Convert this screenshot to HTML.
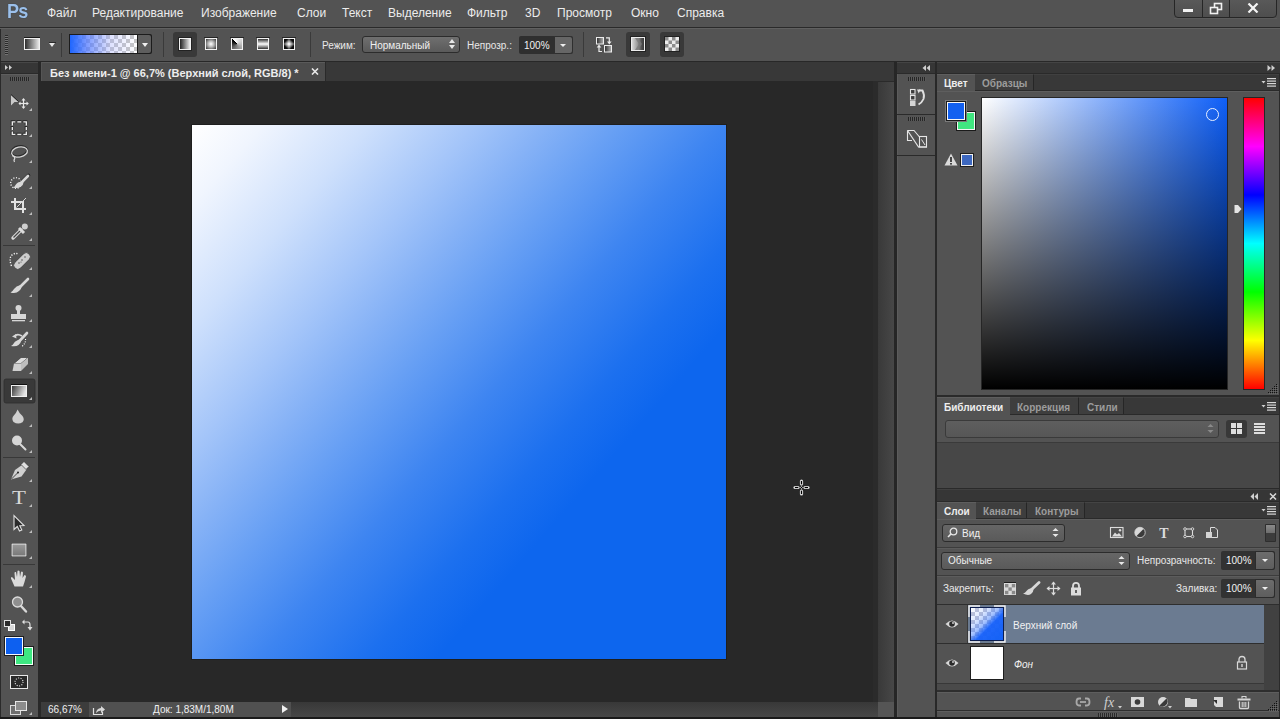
<!DOCTYPE html>
<html><head><meta charset="utf-8">
<style>
*{margin:0;padding:0;box-sizing:border-box}
html,body{width:1280px;height:719px;overflow:hidden;background:#535353;font-family:"Liberation Sans",sans-serif;color:#e6e6e6}
.a{position:absolute}
.t{position:absolute;white-space:nowrap;line-height:1}
.menu{font-size:12px;color:#ececec;top:7px}
</style></head><body>
<!-- MENU BAR -->
<div class="a" style="left:0;top:0;width:1280px;height:27px;background:#535353"></div>
<div class="t" style="left:7px;top:0px;font-size:21px;font-weight:bold;color:#9cc0ea;letter-spacing:-1px;transform:scaleX(0.86);transform-origin:0 0;text-shadow:0 0 1px #1c2a3c">Ps</div>
<div class="t menu" style="left:47px">Файл</div>
<div class="t menu" style="left:92px">Редактирование</div>
<div class="t menu" style="left:201px">Изображение</div>
<div class="t menu" style="left:297px">Слои</div>
<div class="t menu" style="left:342px">Текст</div>
<div class="t menu" style="left:388px">Выделение</div>
<div class="t menu" style="left:467px">Фильтр</div>
<div class="t menu" style="left:525px">3D</div>
<div class="t menu" style="left:557px">Просмотр</div>
<div class="t menu" style="left:631px">Окно</div>
<div class="t menu" style="left:677px">Справка</div>

<!-- window controls -->
<div class="a" style="left:1174px;top:-3px;width:103px;height:21px;background:linear-gradient(180deg,#5a5a5a,#4e4e4e);border:1px solid #262626;border-radius:0 0 4px 4px"></div>
<div class="a" style="left:1202px;top:0;width:1px;height:17px;background:#262626"></div>
<div class="a" style="left:1229px;top:0;width:1px;height:17px;background:#262626"></div>
<div class="a" style="left:1174px;top:18px;width:103px;height:1px;background:#606060;opacity:.6"></div>
<div class="a" style="left:1183px;top:9px;width:10px;height:3px;background:#f2f2f2"></div>
<svg class="a" style="left:1209px;top:2px" width="15" height="13" viewBox="0 0 15 13"><rect x="5.5" y="1.5" width="7" height="6" fill="none" stroke="#f2f2f2" stroke-width="1.6"/><rect x="1.5" y="5.5" width="7" height="6" fill="#525252" stroke="#f2f2f2" stroke-width="1.6"/></svg>
<svg class="a" style="left:1247px;top:3px" width="12" height="10" viewBox="0 0 12 10"><path d="M1.5,0.5 L10.5,9.5 M10.5,0.5 L1.5,9.5" stroke="#f4f4f4" stroke-width="2.2"/></svg>
<div class="a" style="left:0;top:27px;width:1280px;height:1px;background:#2a2a2a"></div>
<div class="a" style="left:0;top:28px;width:1280px;height:1px;background:#606060"></div>

<!-- OPTIONS BAR -->
<div class="a" style="left:5px;top:35px;width:3px;height:20px;background:repeating-linear-gradient(180deg,#2a2a2a 0 1px,#737373 1px 2px)"></div>
<div class="a" style="left:24px;top:37px;width:16px;height:1px;background:#1a1a1a"></div>
<div class="a" style="left:24px;top:38px;width:16px;height:12px;border:1px solid #f0f0f0;background:linear-gradient(90deg,#2e2e2e,#e8e8e8)"></div>
<div class="a" style="left:49px;top:42px;width:7px;height:1px;background:#2a2a2a"></div><div class="a" style="left:49px;top:43px;width:0;height:0;border-left:3px solid transparent;border-right:3px solid transparent;border-top:4px solid #e8e8e8"></div>
<div class="a" style="left:61px;top:33px;width:1px;height:24px;background:#3a3a3a"></div>
<div class="a" style="left:69px;top:34px;width:83px;height:20px;background:#1c1c1c;border-radius:0 2px 2px 0"></div>
<div class="a" style="left:70px;top:35px;width:67px;height:18px;background:linear-gradient(90deg,#1f66ff 0%,rgba(80,120,255,.75) 25%,rgba(160,170,255,.35) 60%,rgba(255,255,255,0) 100%),repeating-conic-gradient(#c6c6c6 0 25%,#ffffff 0 50%) 0 0/8px 8px"></div>
<div class="a" style="left:138px;top:35px;width:13px;height:18px;background:#5e5e5e;border-radius:0 2px 2px 0"></div>
<div class="a" style="left:142px;top:43px;width:0;height:0;border-left:3px solid transparent;border-right:3px solid transparent;border-top:4px solid #f0f0f0"></div>
<div class="a" style="left:163px;top:32px;width:1px;height:25px;background:#3a3a3a"></div>
<div class="a" style="left:173px;top:32px;width:24px;height:25px;background:#393939;border-radius:3px"></div>
<div class="a" style="left:178px;top:37px;width:14px;height:14px;background:#222"></div>
<div class="a" style="left:179px;top:38px;width:12px;height:12px;border:1px solid #f2f2f2;background:linear-gradient(90deg,#222,#eee)"></div>
<div class="a" style="left:204px;top:37px;width:14px;height:1px;background:#262626"></div>
<div class="a" style="left:205px;top:38px;width:12px;height:12px;border:1px solid #f2f2f2;background:radial-gradient(circle at 50% 50%,#fff 0,#bbb 40%,#333 100%)"></div>
<div class="a" style="left:230px;top:37px;width:14px;height:1px;background:#262626"></div>
<div class="a" style="left:231px;top:38px;width:12px;height:12px;border:1px solid #f2f2f2;background:conic-gradient(from 315deg at 50% 50%,#000,#fff 2%,#bbb 40%,#666 75%,#000 100%)"></div>
<div class="a" style="left:256px;top:37px;width:14px;height:1px;background:#262626"></div>
<div class="a" style="left:257px;top:38px;width:12px;height:12px;border:1px solid #f2f2f2;background:linear-gradient(180deg,#333,#fff 50%,#333)"></div>
<div class="a" style="left:282px;top:37px;width:14px;height:1px;background:#262626"></div>
<div class="a" style="left:283px;top:38px;width:12px;height:12px;border:1px solid #f2f2f2;background:#0a0a0a"><svg class="a" style="left:0;top:0" width="10" height="10" viewBox="0 0 10 10"><defs><filter id="bl"><feGaussianBlur stdDeviation="0.5"/></filter></defs><g filter="url(#bl)"><polygon points="5,-1 11,5 5,11 -1,5" fill="#3a3a3a"/><polygon points="5,0 10,5 5,10 0,5" fill="#666"/><polygon points="5,1 9,5 5,9 1,5" fill="#909090"/><polygon points="5,2 8,5 5,8 2,5" fill="#bbb"/><polygon points="5,3 7,5 5,7 3,5" fill="#e0e0e0"/><polygon points="5,4 6,5 5,6 4,5" fill="#fff"/></g></svg></div>
<div class="a" style="left:310px;top:32px;width:1px;height:25px;background:#3a3a3a"></div>
<div class="t" style="left:322px;top:41px;font-size:10px;color:#e8e8e8">Режим:</div>
<div class="a" style="left:362px;top:36px;width:98px;height:17px;background:linear-gradient(180deg,#6f6f6f,#5a5a5a);border:1px solid #2c2c2c;border-radius:3px"></div>
<div class="t" style="left:370px;top:41px;font-size:10px;color:#f0f0f0">Нормальный</div>
<div class="a" style="left:449px;top:39px;width:0;height:0;border-left:3px solid transparent;border-right:3px solid transparent;border-bottom:4px solid #e8e8e8"></div>
<div class="a" style="left:449px;top:45px;width:0;height:0;border-left:3px solid transparent;border-right:3px solid transparent;border-top:4px solid #e8e8e8"></div>
<div class="t" style="left:467px;top:41px;font-size:10px;color:#e8e8e8">Непрозр.:</div>
<div class="a" style="left:519px;top:36px;width:54px;height:18px;background:#2f2f2f;border-radius:2px"></div>
<div class="a" style="left:554px;top:36px;width:19px;height:18px;background:#666;border-radius:0 3px 3px 0;border:1px solid #2f2f2f"></div>
<div class="a" style="left:560px;top:44px;width:0;height:0;border-left:3px solid transparent;border-right:3px solid transparent;border-top:3px solid #eee"></div>
<div class="t" style="left:524px;top:41px;font-size:10px;color:#f2f2f2">100%</div>
<div class="a" style="left:583px;top:32px;width:1px;height:25px;background:#3a3a3a"></div>
<svg class="a" style="left:594px;top:35px" width="20" height="19" viewBox="594 35 20 19">
<defs><linearGradient id="rv" x1="0" y1="0" x2="1" y2="0"><stop offset="0" stop-color="#2a2a2a"/><stop offset="1" stop-color="#b0b0b0"/></linearGradient></defs>
<rect x="596.5" y="37.5" width="7" height="6.5" fill="url(#rv)" stroke="#ececec" stroke-width="1"/>
<rect x="604.5" y="45.5" width="7" height="6.5" fill="url(#rv)" stroke="#ececec" stroke-width="1"/>
<path d="M606,37.8 H609.3 V42" fill="none" stroke="#ececec" stroke-width="1.2"/><polygon points="607,41.5 609.3,44.5 611.6,41.5" fill="#ececec"/>
<path d="M602,51.5 H599 V47" fill="none" stroke="#ececec" stroke-width="1.2"/><polygon points="596.7,47.5 599,44.5 601.3,47.5" fill="#ececec"/>
</svg>
<div class="a" style="left:626px;top:32px;width:24px;height:25px;background:#393939;border-radius:3px"></div>
<div class="a" style="left:630px;top:36px;width:16px;height:16px;background:#222"></div>
<div class="a" style="left:631px;top:37px;width:14px;height:14px;border:1px solid #ececec;background:linear-gradient(90deg,#d8d8d8,#9a9a9a 45%,#505050 80%,#3a3a3a)"></div>
<svg class="a" style="left:632px;top:38px" width="12" height="12" viewBox="0 0 12 12"><path d="M3,0 L7,6 L3,12 L6,12 L10,6 L6,0 Z" fill="#7a7a7a" opacity=".8"/></svg>
<div class="a" style="left:660px;top:32px;width:24px;height:25px;background:#393939;border-radius:3px"></div>
<div class="a" style="left:664px;top:36px;width:16px;height:16px;background:#222"></div>
<svg class="a" style="left:665px;top:37px" width="14" height="14" viewBox="0 0 14 14"><rect width="14" height="14" fill="#ececec"/><rect x="0.0" y="0.0" width="3.5" height="3.5" fill="#8c8c8c"/><rect x="0.0" y="7.0" width="3.5" height="3.5" fill="#8c8c8c"/><rect x="3.5" y="3.5" width="3.5" height="3.5" fill="#8c8c8c"/><rect x="3.5" y="10.5" width="3.5" height="3.5" fill="#8c8c8c"/><rect x="7.0" y="0.0" width="3.5" height="3.5" fill="#8c8c8c"/><rect x="7.0" y="7.0" width="3.5" height="3.5" fill="#8c8c8c"/><rect x="10.5" y="3.5" width="3.5" height="3.5" fill="#8c8c8c"/><rect x="10.5" y="10.5" width="3.5" height="3.5" fill="#8c8c8c"/></svg>
<div class="a" style="left:0;top:61px;width:1280px;height:1px;background:#282828"></div>
<!-- TOOLBOX -->
<div class="a" style="left:0;top:62px;width:38px;height:12px;background:#363636;border-top:1px solid #474747"></div>
<div class="a" style="left:0;top:74px;width:38px;height:645px;background:#535353"></div>
<div class="a" style="left:38px;top:62px;width:3px;height:657px;background:#282828"></div>
<div class="a" style="left:0;top:29px;width:1px;height:32px;background:#2a2a2a"></div>
<svg class="a" style="left:0;top:0" width="40" height="719" viewBox="0 0 40 719">
<rect x="0" y="62" width="1" height="657" fill="#2a2a2a"/>
<polygon points="5,65 8,67.5 5,70" fill="#cfcfcf"/><polygon points="9,65 12,67.5 9,70" fill="#cfcfcf"/>
<rect x="1" y="73" width="37" height="1" fill="#2a2a2a"/><rect x="1" y="74" width="37" height="1" fill="#5e5e5e"/>
<rect x="4" y="379" width="31" height="24" fill="#393939" stroke="#2e2e2e" stroke-width="0.8" rx="2"/>
<g fill="#bdbdbd">
<polygon points="32,108 32,111 29,111"/><polygon points="32,134 32,137 29,137"/><polygon points="32,160 32,163 29,163"/>
<polygon points="32,186 32,189 29,189"/><polygon points="32,212 32,215 29,215"/><polygon points="32,238 32,241 29,241"/>
<polygon points="32,267 32,270 29,270"/><polygon points="32,294 32,297 29,297"/><polygon points="32,319 32,322 29,322"/>
<polygon points="32,345 32,348 29,348"/><polygon points="32,371 32,374 29,374"/><polygon points="32,397 32,400 29,400"/>
<polygon points="32,424 32,427 29,427"/><polygon points="32,450 32,453 29,453"/><polygon points="32,479 32,482 29,482"/>
<polygon points="32,504 32,507 29,507"/><polygon points="32,530 32,533 29,533"/><polygon points="32,556 32,559 29,559"/>
<polygon points="32,585 32,588 29,588"/><polygon points="32,712 32,715 29,715"/>
</g>
<g stroke="#383838" stroke-width="1"><line x1="3" y1="245.5" x2="35" y2="245.5"/><line x1="3" y1="457.5" x2="35" y2="457.5"/><line x1="3" y1="564.5" x2="35" y2="564.5"/></g>
<!-- move -->
<polygon points="11,95 18.5,102 14.5,102 11,105.5" fill="#c9c9c9"/>
<line x1="11" y1="94.5" x2="18.5" y2="101.5" stroke="#222" stroke-width="1"/>
<g stroke="#e6e6e6" stroke-width="1.2"><line x1="19.5" y1="103.5" x2="28" y2="103.5"/><line x1="23.5" y1="99" x2="23.5" y2="108"/></g>
<g fill="#e6e6e6"><polygon points="21.5,100.5 23.5,98 25.5,100.5"/><polygon points="21.5,106.5 23.5,109 25.5,106.5"/><polygon points="20.5,101.5 18.5,103.5 20.5,105.5"/><polygon points="26.5,101.5 28.8,103.5 26.5,105.5"/></g>
<!-- marquee -->
<g fill="none" stroke="#262626" stroke-width="2.6"><path d="M12,125 V121.5 H15.5"/><path d="M16.5,121.5 H21.5"/><path d="M22.5,121.5 H26 V125"/><path d="M26,126 V130"/><path d="M26,131 V134 H22.5"/><path d="M21.5,134 H16.5"/><path d="M15.5,134 H12 V131"/><path d="M12,130 V126"/></g>
<g fill="none" stroke="#ececec" stroke-width="1.4" transform="translate(0.3 0.4)"><path d="M12,125 V121.5 H15"/><path d="M17,121.5 H21"/><path d="M23,121.5 H26 V125"/><path d="M26,126.5 V129.5"/><path d="M26,131 V134 H23"/><path d="M21,134 H17"/><path d="M15,134 H12 V131"/><path d="M12,129.5 V126.5"/></g>
<!-- lasso -->
<ellipse cx="19.3" cy="151.3" rx="8" ry="5" transform="rotate(-12 19.3 151.3)" fill="none" stroke="#2a2a2a" stroke-width="2.2"/>
<ellipse cx="19.5" cy="152" rx="8" ry="5" transform="rotate(-12 19.5 152)" fill="none" stroke="#d8d8d8" stroke-width="1.3"/>
<path d="M12.5,156 q3,1 2,3 q-1,1 0,3" fill="none" stroke="#d8d8d8" stroke-width="1.3"/>
<!-- quick select -->
<circle cx="16" cy="183" r="5.3" fill="none" stroke="#f2f2f2" stroke-width="1.3" stroke-dasharray="1.1 1.6"/>
<path d="M28.5,175.5 L21,182.5" stroke="#262626" stroke-width="3.6" stroke-linecap="round"/>
<path d="M28,176 L21.5,182.5" stroke="#d8d8d8" stroke-width="2.8" stroke-linecap="round"/>
<path d="M22.5,181 Q17,182 15.5,185 Q14.5,187 13,187.5 Q18,189 21,186.5 Q23.5,184.5 23.5,182.5 Z" fill="#d8d8d8"/>
<!-- crop -->
<g fill="#e2e2e2"><rect x="11" y="201" width="13" height="2"/><rect x="14" y="198" width="2" height="12"/><rect x="14" y="208" width="12" height="2"/><rect x="22" y="201" width="2" height="12"/></g>
<line x1="16.5" y1="207.5" x2="26" y2="198" stroke="#d8d8d8" stroke-width="1"/>
<!-- eyedropper -->
<line x1="13" y1="238" x2="21" y2="230" stroke="#d8d8d8" stroke-width="3.4" stroke-linecap="round"/>
<line x1="13.5" y1="237.5" x2="21" y2="230" stroke="#474747" stroke-width="1.2"/>
<line x1="19" y1="228" x2="24" y2="233" stroke="#dcdcdc" stroke-width="3"/>
<circle cx="24.8" cy="226.5" r="3" fill="#cfcfcf"/>
<!-- healing -->
<path d="M11.5,266 Q8.5,258 12,255 Q15,252.5 18.5,254" fill="none" stroke="#fafafa" stroke-width="1.4" stroke-dasharray="1.2 1.5"/>
<rect x="12" y="257" width="20" height="8" rx="4" transform="rotate(-45 22 261)" fill="#cdcdcd" stroke="#2e2e2e" stroke-width="0.6"/>
<g fill="#555"><circle cx="19" cy="263" r=".8"/><circle cx="22" cy="260" r=".8"/><circle cx="25" cy="257" r=".8"/><circle cx="21" cy="262" r=".6"/></g>
<!-- brush -->
<path d="M28,279 L20,287" stroke="#d8d8d8" stroke-width="2.6" stroke-linecap="round"/>
<path d="M20.5,285 Q16,286 14,289 Q12.5,291.5 10.5,292.5 Q16,294 19,291 Q21.5,289 21.5,287 Z" fill="#d8d8d8"/>
<!-- stamp -->
<circle cx="18.5" cy="308" r="3" fill="#d6d6d6"/>
<rect x="17" y="310" width="3" height="5" fill="#d6d6d6"/>
<rect x="11" y="314" width="15" height="5" fill="#d6d6d6"/>
<rect x="12" y="320" width="13" height="1.3" fill="#d6d6d6"/>
<!-- history brush -->
<path d="M22,336 Q17,333 14.5,336.5" fill="none" stroke="#d6d6d6" stroke-width="1.5"/>
<polygon points="12,336.5 16,334 16.5,338.5" fill="#d6d6d6"/>
<path d="M27,333 L19.5,341" stroke="#d6d6d6" stroke-width="2.6" stroke-linecap="round"/>
<path d="M20,339.5 Q15.5,340.5 14,343 Q13,345 11,346 Q16,347 18.5,345 Q21,343 21,341 Z" fill="#d8d8d8"/>
<path d="M25.5,339 Q26,343 22,346.5" fill="none" stroke="#fff" stroke-width="1.1" stroke-dasharray="1 1.4"/>
<!-- eraser -->
<polygon points="14,363.5 21,357.5 28,357.5 21,363.5" fill="#dcdcdc" stroke="#2a2a2a" stroke-width=".6"/>
<polygon points="14,363.5 21,363.5 21,371 12.5,371" fill="#cfcfcf"/>
<polygon points="21,363.5 28,357.5 28,364 21,371" fill="#bdbdbd"/>
<!-- gradient selected -->

<rect x="11" y="384" width="16" height="1" fill="#111"/>
<rect x="11.5" y="385.5" width="15" height="11" fill="url(#gtool)" stroke="#f0f0f0" stroke-width="1"/>
<defs><linearGradient id="gtool" x1="0" y1="0" x2="1" y2="0.3"><stop offset="0" stop-color="#333"/><stop offset="1" stop-color="#e4e4e4"/></linearGradient></defs>
<!-- blur -->
<path d="M17.6,409.5 Q19,413 22.5,416 Q25,419.5 22.5,422.3 Q18,425 13.5,422 Q11,418.5 13.8,415.5 Q16.5,412.5 17.6,409.5 Z" fill="#d0d0d0"/>
<!-- dodge -->
<line x1="19" y1="443" x2="25.5" y2="449.5" stroke="#d8d8d8" stroke-width="2" stroke-linecap="round"/>
<circle cx="17" cy="440.5" r="5" fill="#d6d6d6"/>
<!-- pen -->
<path d="M11,479.5 L15,470 L22,465 L26.5,469.5 L21.5,476.5 Z" fill="#d0d0d0"/>
<polygon points="21,464.5 24,461.5 29,466.5 26,469.5" fill="#e0e0e0" stroke="#2a2a2a" stroke-width=".6"/>
<line x1="11.5" y1="479" x2="18" y2="472.5" stroke="#333" stroke-width=".9"/>
<circle cx="18" cy="472.5" r="1" fill="#222"/>
<!-- type -->
<text x="15.75" y="504.5" transform="scale(1.2 1)" font-family="Liberation Serif" font-size="19" fill="#d8d8d8" text-anchor="middle">T</text>
<!-- path select -->
<path d="M14,515.5 L14,529.5 L17.3,526.5 L19.5,531 L21.8,530 L19.8,525.7 L24,525.5 Z" fill="#2b2b2b" stroke="#e0e0e0" stroke-width="1.1"/>
<!-- rectangle -->
<rect x="11" y="543" width="16" height="14" fill="#262626"/>
<rect x="12" y="544" width="14" height="12" fill="url(#gshape)" stroke="#eaeaea" stroke-width="1"/>
<defs><linearGradient id="gshape" x1="0" y1="0" x2="0" y2="1"><stop offset="0" stop-color="#9a9a9a"/><stop offset="1" stop-color="#777"/></linearGradient></defs>
<!-- hand -->
<path d="M14.5,586.5 L11,578.5 Q10.5,577 12,577 L15,580 L14.5,573 Q14.5,571.5 16,572 L17,577 L17.5,571 Q18,570 19.5,571 L20,577 L21,572 Q22,571 23,572.5 L22.5,578 L24.5,575 Q26,575 26,576.5 L24.5,582 L23,586.5 Z" fill="#dadada"/>
<!-- zoom -->
<line x1="21" y1="606" x2="26" y2="611.5" stroke="#d8d8d8" stroke-width="2.4" stroke-linecap="round"/>
<circle cx="17.5" cy="602" r="5" fill="#8f8f8f" stroke="#dcdcdc" stroke-width="1.3"/>
<!-- default colors -->
<rect x="8.5" y="624.5" width="6" height="6" fill="#d8d8d8" stroke="#fff" stroke-width="1"/>
<rect x="4.5" y="620.5" width="6" height="6" fill="#2a2a2a" stroke="#e0e0e0" stroke-width="1"/>
<!-- swap -->
<path d="M24,622 L28,622 Q30,622 30,625 L30,628" fill="none" stroke="#e0e0e0" stroke-width="1.2"/>
<polygon points="24.5,619.5 22,622 24.5,624.5" fill="#e0e0e0"/><polygon points="27.5,627 30,630.5 32.5,627" fill="#e0e0e0"/>
<!-- fg/bg -->
<rect x="14" y="646" width="20" height="20" fill="#1e1e1e"/><rect x="15" y="647" width="18" height="18" fill="#f4fff8"/><rect x="16" y="648" width="16" height="16" fill="#3ee882"/>
<rect x="4" y="636" width="20" height="20" fill="#1e1e1e"/><rect x="5" y="637" width="18" height="18" fill="#f4f8ff"/><rect x="6" y="638" width="16" height="16" fill="#0d60f0"/>
<!-- quick mask -->
<rect x="10.5" y="675.5" width="17" height="13" fill="#2a2a2a" stroke="#e8e8e8" stroke-width="1"/>
<circle cx="19" cy="682" r="4" fill="none" stroke="#f0f0f0" stroke-width="1.1" stroke-dasharray="1 1.5"/>
<!-- screen mode -->
<rect x="10.5" y="705.5" width="10" height="9" fill="#6f6f6f" stroke="#dcdcdc" stroke-width="1"/>
<rect x="15.5" y="701.5" width="11" height="9" fill="#8c8c8c" stroke="#e6e6e6" stroke-width="1"/>
</svg>
<div class="a" style="left:10px;top:77px;width:20px;height:4px;background:repeating-linear-gradient(90deg,#262626 0 1px,#5a5a5a 1px 2px)"></div>


<!-- DOCUMENT -->
<div class="a" style="left:41px;top:62px;width:854px;height:19px;background:#383838"></div>
<div class="a" style="left:41px;top:62px;width:284px;height:19px;background:#4c4c4c;border-top:1px solid #5a5a5a;border-left:1px solid #555"></div>
<div class="a" style="left:325px;top:62px;width:1px;height:19px;background:#2a2a2a"></div>
<div class="t" style="left:50px;top:68px;font-size:11px;font-weight:bold;color:#eeeeee">Без имени-1 @ 66,7% (Верхний слой, RGB/8) *</div>
<svg class="a" style="left:311px;top:68px" width="8" height="7" viewBox="0 0 8 7"><path d="M1,0.5 L7,6.5 M7,0.5 L1,6.5" stroke="#e8e8e8" stroke-width="1.6"/></svg>
<div class="a" style="left:41px;top:81px;width:837px;height:621px;background:#282828"></div>

<svg class="a" style="left:792px;top:478px" width="20" height="20" viewBox="792 478 20 20">
<g stroke="#d8d8d8" stroke-width="3.2" stroke-linecap="round"><line x1="801.5" y1="481" x2="801.5" y2="484"/><line x1="801.5" y1="491" x2="801.5" y2="494"/><line x1="795" y1="487.5" x2="798" y2="487.5"/><line x1="805" y1="487.5" x2="808" y2="487.5"/></g>
<g stroke="#000" stroke-width="1.2"><line x1="801.5" y1="481" x2="801.5" y2="484"/><line x1="801.5" y1="491" x2="801.5" y2="494"/><line x1="795" y1="487.5" x2="798" y2="487.5"/><line x1="805" y1="487.5" x2="808" y2="487.5"/></g>
<g stroke="#9a9a9a" stroke-width="1"><line x1="801.5" y1="484" x2="801.5" y2="491"/><line x1="798" y1="487.5" x2="805" y2="487.5"/></g>
<rect x="801" y="487" width="1" height="1" fill="#000"/>
</svg>
<div class="a" style="left:873px;top:81px;width:5px;height:621px;background:#2b2b2b"></div>
<div class="a" style="left:878px;top:81px;width:16px;height:621px;background:linear-gradient(90deg,#393939,#474747);border-top:1px solid #2a2a2a"></div>
<div class="a" style="left:192px;top:125px;width:534px;height:534px;box-shadow:0 0 0 1px #1e1e1e;background:linear-gradient(131deg,#ffffff 0.0%,#f0f5fe 7.1%,#cee0fc 17.8%,#a4c5f9 28.4%,#86b2f6 35.5%,#68a0f4 42.6%,#3e85f1 53.2%,#1c70ef 63.9%,#0d66ee 71.0%)"></div>
<div class="a" style="left:41px;top:702px;width:837px;height:15px;background:linear-gradient(180deg,#383838,#474747)"></div>
<div class="a" style="left:41px;top:702px;width:250px;height:15px;background:#505050"></div>
<div class="a" style="left:41px;top:702px;width:48px;height:15px;background:#3c3c3c"></div>
<div class="t" style="left:48px;top:705px;font-size:10px;color:#f0f0f0">66,67%</div>
<svg class="a" style="left:92px;top:703px" width="14" height="13" viewBox="0 0 14 13"><path d="M1.5,5 V11.5 H10.5 V9" fill="none" stroke="#e0e0e0" stroke-width="1.2"/><path d="M4,10 Q4.5,5.5 9,5 V3 L13,6.5 L9,10 V7.5 Q6,7.5 4,10 Z" fill="#d8d8d8"/></svg>
<div class="t" style="left:153px;top:705px;font-size:10px;color:#f0f0f0">Док: 1,83M/1,80M</div>
<div class="a" style="left:282px;top:705px;width:0;height:0;border-top:4px solid transparent;border-bottom:4px solid transparent;border-left:6px solid #f0f0f0"></div>
<div class="a" style="left:878px;top:702px;width:16px;height:15px;background:#555"></div>

<!-- DOCK -->
<div class="a" style="left:894px;top:62px;width:3px;height:657px;background:#262626"></div>
<div class="a" style="left:897px;top:74px;width:1px;height:645px;background:#5c5c5c"></div>
<div class="a" style="left:897px;top:62px;width:38px;height:11px;background:#363636;border-top:1px solid #444"></div>
<div class="a" style="left:897px;top:73px;width:38px;height:1px;background:#2a2a2a"></div>
<svg class="a" style="left:922px;top:65px" width="9" height="6" viewBox="0 0 9 6"><polygon points="4,0 0.5,3 4,6" fill="#cfcfcf"/><polygon points="8,0 4.5,3 8,6" fill="#cfcfcf"/></svg>
<div class="a" style="left:897px;top:114px;width:38px;height:1px;background:#2a2a2a"></div>
<div class="a" style="left:897px;top:155px;width:38px;height:1px;background:#2a2a2a"></div>
<div class="a" style="left:908px;top:77px;width:18px;height:4px;background:repeating-linear-gradient(90deg,#262626 0 1px,#5a5a5a 1px 2px)"></div>
<div class="a" style="left:908px;top:117px;width:18px;height:4px;background:repeating-linear-gradient(90deg,#262626 0 1px,#5a5a5a 1px 2px)"></div>
<svg class="a" style="left:904px;top:86px" width="26" height="64" viewBox="904 86 26 64">
<rect x="910.5" y="89.5" width="4.5" height="4.5" fill="#3c3c3c" stroke="#e6e6e6" stroke-width="1.1"/>
<rect x="910.5" y="95.5" width="4.5" height="4.5" fill="#3c3c3c" stroke="#e6e6e6" stroke-width="1.1"/>
<rect x="910" y="101" width="5.5" height="5" fill="#d4d4d4"/>
<path d="M919,90.5 H922.5 Q924.8,95 923.5,99 Q922,102.5 918.5,104.5" fill="none" stroke="#e0e0e0" stroke-width="1.9"/>
<polygon points="917,89.5 920.5,89.5 918.7,93.5" fill="#e0e0e0"/>
<path d="M907.5,130.5 H914 L919.5,137" fill="none" stroke="#e6e6e6" stroke-width="1.1"/>
<path d="M907.5,130.5 L918.5,147" fill="none" stroke="#e6e6e6" stroke-width="1.2"/>
<path d="M907.5,130.5 V140.5 H912" fill="none" stroke="#e6e6e6" stroke-width="1.1"/>
<rect x="919.5" y="136.5" width="7" height="10.5" fill="none" stroke="#e6e6e6" stroke-width="1.1"/>
<path d="M918,147 H927" stroke="#e6e6e6" stroke-width="1.1"/>
<path d="M921.5,139.5 L925,145" stroke="#e6e6e6" stroke-width="1"/>
</svg>
<div class="a" style="left:935px;top:62px;width:2px;height:657px;background:#282828"></div>

<!-- RIGHT PANELS -->
<div class="a" style="left:937px;top:62px;width:343px;height:11px;background:#363636;border-top:1px solid #444"></div>
<div class="a" style="left:937px;top:73px;width:343px;height:1px;background:#2a2a2a"></div>
<svg class="a" style="left:1267px;top:65px" width="9" height="6" viewBox="0 0 9 6"><polygon points="0.5,0 4,3 0.5,6" fill="#cfcfcf"/><polygon points="4.5,0 8,3 4.5,6" fill="#cfcfcf"/></svg>
<div class="a" style="left:1279px;top:74px;width:1px;height:645px;background:#2a2a2a"></div>
<!-- color panel -->
<div class="a" style="left:937px;top:74px;width:342px;height:17px;background:#383838;border-top:1px solid #404040"></div>
<div class="a" style="left:937px;top:90px;width:342px;height:1px;background:#2a2a2a"></div>
<div class="a" style="left:937px;top:74px;width:38px;height:17px;background:#535353;border-top:1px solid #5e5e5e"></div>
<div class="a" style="left:975px;top:74px;width:59px;height:16px;background:#3e3e3e;border-right:1px solid #262626;border-top:1px solid #454545"></div>
<div class="t" style="left:944px;top:79px;font-size:10px;font-weight:bold;color:#eeeeee">Цвет</div>
<div class="t" style="left:982px;top:79px;font-size:10px;font-weight:bold;color:#9c9c9c">Образцы</div>
<svg class="a" style="left:1261px;top:78px" width="15" height="9" viewBox="0 0 15 9"><polygon points="0.5,3 4.5,3 2.5,5.5" fill="#cfcfcf"/><g fill="#d8d8d8"><rect x="6" y="0" width="9" height="1.2"/><rect x="6" y="2.5" width="9" height="1.2"/><rect x="6" y="5" width="9" height="1.2"/><rect x="6" y="7.5" width="9" height="1.2"/></g></svg>
<div class="a" style="left:937px;top:91px;width:342px;height:304px;background:#535353;border-top:1px solid #5e5e5e"></div>
<!-- fg/bg swatches -->
<div class="a" style="left:945px;top:100px;width:22px;height:22px;background:#7a7a7a"></div>
<div class="a" style="left:946px;top:101px;width:20px;height:20px;background:#1a1a1a"></div>
<div class="a" style="left:956px;top:111px;width:20px;height:20px;background:#1a1a1a"></div>
<div class="a" style="left:957px;top:112px;width:18px;height:18px;background:#40e680;border:1px solid #f4f4f4"></div>
<div class="a" style="left:945px;top:100px;width:22px;height:22px;background:#7a7a7a"></div>
<div class="a" style="left:946px;top:101px;width:20px;height:20px;background:#1a1a1a"></div>
<div class="a" style="left:947px;top:102px;width:18px;height:18px;background:#1360f0;border:1px solid #f8f8f8"></div>
<svg class="a" style="left:944px;top:153px" width="14" height="13" viewBox="0 0 14 13"><polygon points="7,0.5 13.5,12.5 0.5,12.5" fill="#dadada"/><rect x="6.2" y="4" width="1.6" height="5" fill="#222"/><rect x="6.2" y="10" width="1.6" height="1.6" fill="#222"/></svg>
<div class="a" style="left:960px;top:153px;width:14px;height:14px;background:#1e1e1e"></div>
<div class="a" style="left:961px;top:154px;width:12px;height:12px;background:#3d68c0;border:1px solid #f0f0f0"></div>
<!-- spectrum -->
<div class="a" style="left:981px;top:97px;width:247px;height:293px;background:#262626"></div>
<div class="a" style="left:982px;top:98px;width:245px;height:291px;background:linear-gradient(180deg,rgba(0,0,0,0),#000),linear-gradient(90deg,#fff,#0e5ff8)"></div>
<div class="a" style="left:1206px;top:108px;width:13px;height:13px;border:1.3px solid #e8f0ff;border-radius:50%"></div>
<div class="a" style="left:1243px;top:97px;width:22px;height:293px;background:#262626"></div>
<div class="a" style="left:1244px;top:98px;width:20px;height:291px;background:linear-gradient(180deg,#ff0000 0%,#ff00ff 16.67%,#0000ff 33.33%,#00ffff 50%,#00ff00 66.67%,#ffff00 83.33%,#ff0000 100%)"></div>
<svg class="a" style="left:1234px;top:204px" width="8" height="10" viewBox="0 0 8 10"><path d="M0.5,1 L4,1 L7.5,5 L4,9 L0.5,9 Z" fill="#e4e4e4"/></svg>

<div class="a" style="left:937px;top:395px;width:342px;height:2px;background:#2a2a2a"></div>
<!-- libraries -->
<div class="a" style="left:937px;top:397px;width:342px;height:17px;background:#383838;border-top:1px solid #404040"></div>
<div class="a" style="left:937px;top:414px;width:342px;height:1px;background:#2a2a2a"></div>
<div class="a" style="left:937px;top:397px;width:73px;height:18px;background:#535353;border-top:1px solid #5e5e5e"></div>
<div class="a" style="left:1010px;top:397px;width:69px;height:17px;background:#3e3e3e;border-right:1px solid #262626;border-top:1px solid #454545"></div>
<div class="a" style="left:1079px;top:397px;width:45px;height:17px;background:#3e3e3e;border-right:1px solid #262626;border-top:1px solid #454545"></div>
<div class="t" style="left:944px;top:403px;font-size:10px;font-weight:bold;color:#eeeeee">Библиотеки</div>
<div class="t" style="left:1017px;top:403px;font-size:10px;font-weight:bold;color:#9c9c9c">Коррекция</div>
<div class="t" style="left:1087px;top:403px;font-size:10px;font-weight:bold;color:#9c9c9c">Стили</div>
<svg class="a" style="left:1261px;top:402px" width="15" height="9" viewBox="0 0 15 9"><polygon points="0.5,3 4.5,3 2.5,5.5" fill="#cfcfcf"/><g fill="#d8d8d8"><rect x="6" y="0" width="9" height="1.2"/><rect x="6" y="2.5" width="9" height="1.2"/><rect x="6" y="5" width="9" height="1.2"/><rect x="6" y="7.5" width="9" height="1.2"/></g></svg>
<div class="a" style="left:937px;top:415px;width:342px;height:27px;background:#535353"></div>
<div class="a" style="left:945px;top:420px;width:274px;height:18px;background:linear-gradient(180deg,#5e5e5e,#565656);border:1px solid #3a3a3a;border-radius:3px"></div>
<svg class="a" style="left:1207px;top:423px" width="7" height="11" viewBox="0 0 7 11"><polygon points="0.5,4 3.5,1 6.5,4" fill="#8a8a8a"/><polygon points="0.5,7 3.5,10 6.5,7" fill="#8a8a8a"/></svg>
<div class="a" style="left:1226px;top:420px;width:21px;height:18px;background:#383838;border-radius:3px"></div>
<svg class="a" style="left:1231px;top:423px" width="12" height="12" viewBox="0 0 12 12"><g fill="#dedede"><rect x="0" y="0" width="5" height="5"/><rect x="6" y="0" width="5" height="5"/><rect x="0" y="6" width="5" height="5"/><rect x="6" y="6" width="5" height="5"/></g></svg>
<svg class="a" style="left:1254px;top:423px" width="12" height="12" viewBox="0 0 12 12"><g fill="#dedede"><rect x="0" y="0" width="11" height="2"/><rect x="0" y="3" width="11" height="2"/><rect x="0" y="6" width="11" height="2"/><rect x="0" y="9" width="11" height="2"/></g></svg>
<div class="a" style="left:937px;top:442px;width:342px;height:1px;background:#3a3a3a"></div>
<div class="a" style="left:937px;top:443px;width:342px;height:45px;background:#474747"></div>
<div class="a" style="left:937px;top:488px;width:342px;height:1px;background:#2a2a2a"></div>
<!-- layers -->
<div class="a" style="left:937px;top:489px;width:342px;height:12px;background:#363636;border-top:1px solid #404040"></div>
<svg class="a" style="left:1250px;top:493px" width="9" height="7" viewBox="0 0 9 7"><polygon points="4,0 0.5,3.5 4,7" fill="#cfcfcf"/><polygon points="8,0 4.5,3.5 8,7" fill="#cfcfcf"/></svg>
<svg class="a" style="left:1269px;top:493px" width="8" height="7" viewBox="0 0 8 7"><path d="M1,0.5 L7,6.5 M7,0.5 L1,6.5" stroke="#d8d8d8" stroke-width="1.5"/></svg>
<div class="a" style="left:937px;top:501px;width:342px;height:1px;background:#2a2a2a"></div>
<div class="a" style="left:937px;top:502px;width:342px;height:16px;background:#383838;border-top:1px solid #444"></div>
<div class="a" style="left:937px;top:518px;width:342px;height:1px;background:#2a2a2a"></div>
<div class="a" style="left:937px;top:502px;width:39px;height:17px;background:#535353;border-top:1px solid #5e5e5e"></div>
<div class="a" style="left:976px;top:502px;width:51px;height:16px;background:#3e3e3e;border-right:1px solid #262626;border-top:1px solid #454545"></div>
<div class="a" style="left:1027px;top:502px;width:58px;height:16px;background:#3e3e3e;border-right:1px solid #262626;border-top:1px solid #454545"></div>
<div class="t" style="left:944px;top:507px;font-size:10px;font-weight:bold;color:#eeeeee">Слои</div>
<div class="t" style="left:983px;top:507px;font-size:10px;font-weight:bold;color:#9c9c9c">Каналы</div>
<div class="t" style="left:1035px;top:507px;font-size:10px;font-weight:bold;color:#9c9c9c">Контуры</div>
<svg class="a" style="left:1261px;top:506px" width="15" height="9" viewBox="0 0 15 9"><polygon points="0.5,3 4.5,3 2.5,5.5" fill="#cfcfcf"/><g fill="#d8d8d8"><rect x="6" y="0" width="9" height="1.2"/><rect x="6" y="2.5" width="9" height="1.2"/><rect x="6" y="5" width="9" height="1.2"/><rect x="6" y="7.5" width="9" height="1.2"/></g></svg>
<div class="a" style="left:937px;top:519px;width:342px;height:200px;background:#535353;border-top:1px solid #5e5e5e"></div>

<!-- filter row -->
<div class="a" style="left:942px;top:524px;width:123px;height:18px;background:linear-gradient(180deg,#666,#5a5a5a);border:1px solid #2c2c2c;border-radius:3px"></div>
<svg class="a" style="left:947px;top:527px" width="11" height="11" viewBox="0 0 11 11"><circle cx="6.5" cy="4.5" r="3.3" fill="none" stroke="#e6e6e6" stroke-width="1.3"/><line x1="1" y1="10" x2="4.2" y2="6.8" stroke="#e6e6e6" stroke-width="1.6"/></svg>
<div class="t" style="left:962px;top:529px;font-size:10px;color:#f0f0f0">Вид</div>
<svg class="a" style="left:1052px;top:527px" width="7" height="11" viewBox="0 0 7 11"><polygon points="0.5,4 3.5,1 6.5,4" fill="#e8e8e8"/><polygon points="0.5,7 3.5,10 6.5,7" fill="#e8e8e8"/></svg>
<svg class="a" style="left:1108px;top:525px" width="112" height="15" viewBox="1108 525 112 15">
<rect x="1110.5" y="527.5" width="12.5" height="10" fill="none" stroke="#dcdcdc" stroke-width="1.1"/>
<polygon points="1112,536.5 1115,532.5 1117,534.5 1119,533 1122,536.5" fill="#dcdcdc"/><circle cx="1120" cy="530.3" r="1.2" fill="#dcdcdc"/>
<circle cx="1140" cy="532.5" r="5.2" fill="#3a3a3a" stroke="#dcdcdc" stroke-width="0.8"/>
<path d="M1136.3,536.2 A5.2,5.2 0 0 1 1143.7,528.8 Z" fill="#d8d8d8"/>
<text x="1164" y="538" font-family="Liberation Serif" font-size="14" font-weight="bold" fill="#dcdcdc" text-anchor="middle">T</text>
<rect x="1185" y="529" width="7.5" height="7.5" fill="none" stroke="#dcdcdc" stroke-width="1.1"/>
<g fill="#535353" stroke="#dcdcdc" stroke-width="0.9"><circle cx="1185" cy="529" r="1.3"/><circle cx="1192.5" cy="529" r="1.3"/><circle cx="1185" cy="536.5" r="1.3"/><circle cx="1192.5" cy="536.5" r="1.3"/></g>
<path d="M1210.5,527.5 L1215,527.5 L1217.5,530 L1217.5,537.5 L1210.5,537.5 Z" fill="none" stroke="#dcdcdc" stroke-width="1"/>
<rect x="1206" y="532" width="6" height="6" fill="#d4d4d4"/>
</svg>
<div class="a" style="left:1265px;top:524px;width:11px;height:18px;background:#2e2e2e;border-radius:1px"></div>
<div class="a" style="left:1266px;top:525px;width:9px;height:8px;background:linear-gradient(180deg,#8a8a8a,#6e6e6e)"></div>
<div class="a" style="left:1266px;top:533px;width:9px;height:8px;background:#3c3c3c"></div>
<div class="a" style="left:937px;top:547px;width:342px;height:1px;background:#3c3c3c"></div>
<div class="a" style="left:937px;top:548px;width:342px;height:1px;background:#5c5c5c"></div>
<!-- blend row -->
<div class="a" style="left:941px;top:552px;width:189px;height:18px;background:linear-gradient(180deg,#666,#5a5a5a);border:1px solid #2c2c2c;border-radius:3px"></div>
<div class="t" style="left:948px;top:556px;font-size:10px;color:#f0f0f0">Обычные</div>
<svg class="a" style="left:1118px;top:555px" width="7" height="11" viewBox="0 0 7 11"><polygon points="0.5,4 3.5,1 6.5,4" fill="#e8e8e8"/><polygon points="0.5,7 3.5,10 6.5,7" fill="#e8e8e8"/></svg>
<div class="t" style="left:1137px;top:556px;font-size:10px;color:#e8e8e8">Непрозрачность:</div>
<div class="a" style="left:1221px;top:551px;width:54px;height:19px;background:#323232;border-radius:2px"></div>
<div class="a" style="left:1255px;top:551px;width:20px;height:19px;background:linear-gradient(180deg,#6c6c6c,#5e5e5e);border:1px solid #2c2c2c;border-radius:0 3px 3px 0"></div>
<div class="a" style="left:1262px;top:559px;width:0;height:0;border-left:3px solid transparent;border-right:3px solid transparent;border-top:3px solid #eee"></div>
<div class="t" style="left:1226px;top:556px;font-size:10px;color:#f2f2f2">100%</div>
<div class="a" style="left:937px;top:575px;width:342px;height:1px;background:#3c3c3c"></div>
<div class="a" style="left:937px;top:576px;width:342px;height:1px;background:#5c5c5c"></div>
<!-- lock row -->
<div class="t" style="left:943px;top:584px;font-size:10px;color:#e8e8e8">Закрепить:</div>
<svg class="a" style="left:1004px;top:582px" width="12" height="13" viewBox="0 -1 12 13"><rect x="0" y="-1" width="12" height="1" fill="#1e1e1e"/><rect x="0" y="0" width="12" height="12" fill="#dadada"/><rect x="1.0" y="1.0" width="3.4" height="3.4" fill="#8a8a8a"/><rect x="1.0" y="7.8" width="3.4" height="3.4" fill="#8a8a8a"/><rect x="4.4" y="4.4" width="3.4" height="3.4" fill="#8a8a8a"/><rect x="7.8" y="1.0" width="3.4" height="3.4" fill="#8a8a8a"/><rect x="7.8" y="7.8" width="3.4" height="3.4" fill="#8a8a8a"/></svg>
<svg class="a" style="left:1022px;top:581px" width="62" height="15" viewBox="1022 581 62 15">
<path d="M1039,582.5 L1031,590" stroke="#d8d8d8" stroke-width="2.8" stroke-linecap="round"/>
<path d="M1032.5,588 Q1028,588.5 1026.5,591 Q1025,593 1023,593.5 Q1028,596 1031,594 Q1033.5,592 1033.5,589.5 Z" fill="#d8d8d8"/>
<g stroke="#dcdcdc" stroke-width="1.2"><line x1="1047" y1="588.5" x2="1060" y2="588.5"/><line x1="1053.5" y1="582" x2="1053.5" y2="595"/></g>
<g fill="#dcdcdc"><polygon points="1051,584.5 1053.5,581.5 1056,584.5"/><polygon points="1051,592.5 1053.5,595.5 1056,592.5"/><polygon points="1049.5,586 1046.5,588.5 1049.5,591"/><polygon points="1057.5,586 1060.5,588.5 1057.5,591"/></g>
<path d="M1073,588 V586 Q1073,582.8 1076,582.8 Q1079,582.8 1079,586 V588" fill="none" stroke="#dcdcdc" stroke-width="1.8"/>
<rect x="1071" y="587.5" width="10" height="8" fill="#dcdcdc"/><rect x="1075.2" y="590" width="1.6" height="3" fill="#444"/>
</svg>
<div class="t" style="left:1176px;top:584px;font-size:10px;color:#e8e8e8">Заливка:</div>
<div class="a" style="left:1221px;top:579px;width:54px;height:19px;background:#323232;border-radius:2px"></div>
<div class="a" style="left:1255px;top:579px;width:20px;height:19px;background:linear-gradient(180deg,#6c6c6c,#5e5e5e);border:1px solid #2c2c2c;border-radius:0 3px 3px 0"></div>
<div class="a" style="left:1262px;top:587px;width:0;height:0;border-left:3px solid transparent;border-right:3px solid transparent;border-top:3px solid #eee"></div>
<div class="t" style="left:1226px;top:584px;font-size:10px;color:#f2f2f2">100%</div>
<!-- layer rows -->
<div class="a" style="left:937px;top:604px;width:342px;height:1px;background:#2e2e2e"></div>
<div class="a" style="left:937px;top:605px;width:327px;height:38px;background:#6b7b91"></div>
<div class="a" style="left:937px;top:605px;width:30px;height:38px;background:#535353"></div>
<div class="a" style="left:967px;top:605px;width:1px;height:78px;background:#3a3a3a"></div>
<div class="a" style="left:937px;top:643px;width:327px;height:1px;background:#2e2e2e"></div>
<div class="a" style="left:937px;top:644px;width:327px;height:39px;background:#535353"></div>
<div class="a" style="left:937px;top:683px;width:327px;height:1px;background:#383838"></div>
<div class="a" style="left:937px;top:684px;width:327px;height:7px;background:#4a4a4a"></div>
<div class="a" style="left:1264px;top:605px;width:15px;height:86px;background:#414141"></div>
<svg class="a" style="left:944px;top:617px" width="16" height="14" viewBox="0 0 16 14"><path d="M1.5,7 Q8,0 14.5,7 Q8,14 1.5,7 Z" fill="#d8d8d8"/><circle cx="8" cy="7" r="2.8" fill="#2a2a2a"/><circle cx="9" cy="6" r="0.9" fill="#ddd"/></svg>
<svg class="a" style="left:944px;top:656px" width="16" height="14" viewBox="0 0 16 14"><path d="M1.5,7 Q8,0 14.5,7 Q8,14 1.5,7 Z" fill="#d8d8d8"/><circle cx="8" cy="7" r="2.8" fill="#2a2a2a"/><circle cx="9" cy="6" r="0.9" fill="#ddd"/></svg>
<svg class="a" style="left:968px;top:605px" width="38" height="38" viewBox="0 0 38 38"><g fill="none" stroke="#f4f4f4" stroke-width="1.4"><path d="M1,12 V1 H12"/><path d="M26,1 H37 V12"/><path d="M37,26 V37 H26"/><path d="M12,37 H1 V26"/></g></svg>
<div class="a" style="left:970px;top:607px;width:34px;height:34px;background:#0c1e50"></div>
<div class="a" style="left:971px;top:608px;width:32px;height:32px;background:linear-gradient(135deg,rgba(40,110,255,0) 0%,rgba(40,110,255,.15) 25%,rgba(40,110,255,.45) 45%,rgba(20,95,250,.95) 58%,#1462f5 100%),repeating-conic-gradient(#c4c6d6 0 25%,#ffffff 0 50%) 0 0/8px 8px"></div>
<div class="t" style="left:1013px;top:621px;font-size:10px;color:#f2f2f2">Верхний слой</div>
<div class="a" style="left:970px;top:646px;width:34px;height:34px;background:#1e1e1e"></div>
<div class="a" style="left:971px;top:647px;width:32px;height:32px;background:#ffffff"></div>
<div class="t" style="left:1014px;top:660px;font-size:10px;font-style:italic;color:#f0f0f0">Фон</div>
<svg class="a" style="left:1236px;top:655px" width="12" height="15" viewBox="0 0 12 15"><path d="M3,7 V4.5 Q3,1.5 6,1.5 Q9,1.5 9,4.5 V7" fill="none" stroke="#d8d8d8" stroke-width="1.3"/><rect x="1.5" y="7" width="9" height="7" fill="none" stroke="#d8d8d8" stroke-width="1.2"/><rect x="5.3" y="9" width="1.4" height="3" fill="#d8d8d8"/></svg>
<!-- bottom bar -->
<div class="a" style="left:937px;top:690px;width:342px;height:2px;background:#2e2e2e"></div>
<div class="a" style="left:937px;top:692px;width:342px;height:18px;background:#535353;border-top:1px solid #5e5e5e"></div>
<svg class="a" style="left:1070px;top:693px" width="200" height="18" viewBox="1070 693 200 18">
<g fill="none" stroke="#a8a8a8" stroke-width="1.8"><path d="M1081,698.5 H1079 Q1076.5,698.5 1076.5,702 Q1076.5,705.5 1079,705.5 H1081"/><path d="M1085,698.5 H1087 Q1089.5,698.5 1089.5,702 Q1089.5,705.5 1087,705.5 H1085"/><line x1="1080" y1="702" x2="1086" y2="702"/></g>
<text x="1104" y="707" font-family="Liberation Serif" font-style="italic" font-size="14" fill="#d0d0d0">fx</text>
<polygon points="1118,706 1122,706 1120,708.5" fill="#d0d0d0"/>
<rect x="1131" y="697" width="13" height="10" fill="#d8d8d8"/><circle cx="1137.5" cy="702" r="2.8" fill="#3a3a3a"/>
<circle cx="1163" cy="702" r="5" fill="#d8d8d8"/><path d="M1159.5,705.5 A5,5 0 0 0 1166.5,698.5 Z" fill="#3a3a3a"/>
<polygon points="1168,706 1172,706 1170,708.5" fill="#d0d0d0"/>
<path d="M1185,698 H1190 L1191,699 H1197 V707 H1185 Z" fill="#d8d8d8"/>
<path d="M1214,697 H1223 V707 H1216 L1214,705 Z" fill="#d8d8d8"/><path d="M1213,700 H1217 V704 Z" fill="#2e2e2e"/>
<rect x="1237.5" y="698.5" width="13" height="2" fill="#d4d4d4"/><path d="M1242,698.5 V696.5 H1246 V698.5" fill="none" stroke="#d4d4d4" stroke-width="1.1"/>
<path d="M1239.5,701.5 V707.5 Q1239.5,708.5 1240.5,708.5 H1247.5 Q1248.5,708.5 1248.5,707.5 V701.5" fill="none" stroke="#d4d4d4" stroke-width="1.3"/>
<g stroke="#d4d4d4" stroke-width="1.1"><line x1="1242.2" y1="702" x2="1242.2" y2="707"/><line x1="1244" y1="702" x2="1244" y2="707"/><line x1="1245.8" y1="702" x2="1245.8" y2="707"/></g>
</svg>

<div class="a" style="left:937px;top:710px;width:342px;height:1px;background:#2e2e2e"></div>
<div class="a" style="left:937px;top:711px;width:342px;height:6px;background:#535353;border-top:1px solid #5e5e5e"></div>
<div class="a" style="left:1098px;top:713px;width:20px;height:4px;background:repeating-linear-gradient(90deg,#2a2a2a 0 1px,#5e5e5e 1px 2px)"></div>

<div class="a" style="left:0;top:717px;width:1280px;height:2px;background:#1a1a1a"></div>
<svg class="a" style="left:0;top:0" width="1280" height="719" viewBox="0 0 1280 719"><rect x="1276" y="384" width="1" height="1" fill="#111"/><rect x="1277" y="385" width="1" height="1" fill="#6a6a6a"/><rect x="1274" y="386" width="1" height="1" fill="#111"/><rect x="1275" y="387" width="1" height="1" fill="#6a6a6a"/><rect x="1276" y="386" width="1" height="1" fill="#111"/><rect x="1277" y="387" width="1" height="1" fill="#6a6a6a"/><rect x="1272" y="388" width="1" height="1" fill="#111"/><rect x="1273" y="389" width="1" height="1" fill="#6a6a6a"/><rect x="1274" y="388" width="1" height="1" fill="#111"/><rect x="1275" y="389" width="1" height="1" fill="#6a6a6a"/><rect x="1276" y="388" width="1" height="1" fill="#111"/><rect x="1277" y="389" width="1" height="1" fill="#6a6a6a"/><rect x="1270" y="390" width="1" height="1" fill="#111"/><rect x="1271" y="391" width="1" height="1" fill="#6a6a6a"/><rect x="1272" y="390" width="1" height="1" fill="#111"/><rect x="1273" y="391" width="1" height="1" fill="#6a6a6a"/><rect x="1274" y="390" width="1" height="1" fill="#111"/><rect x="1275" y="391" width="1" height="1" fill="#6a6a6a"/><rect x="1276" y="390" width="1" height="1" fill="#111"/><rect x="1277" y="391" width="1" height="1" fill="#6a6a6a"/><rect x="1268" y="392" width="1" height="1" fill="#111"/><rect x="1269" y="393" width="1" height="1" fill="#6a6a6a"/><rect x="1270" y="392" width="1" height="1" fill="#111"/><rect x="1271" y="393" width="1" height="1" fill="#6a6a6a"/><rect x="1272" y="392" width="1" height="1" fill="#111"/><rect x="1273" y="393" width="1" height="1" fill="#6a6a6a"/><rect x="1274" y="392" width="1" height="1" fill="#111"/><rect x="1275" y="393" width="1" height="1" fill="#6a6a6a"/><rect x="1276" y="392" width="1" height="1" fill="#111"/><rect x="1277" y="393" width="1" height="1" fill="#6a6a6a"/><rect x="1276" y="701" width="1" height="1" fill="#111"/><rect x="1277" y="702" width="1" height="1" fill="#6a6a6a"/><rect x="1274" y="703" width="1" height="1" fill="#111"/><rect x="1275" y="704" width="1" height="1" fill="#6a6a6a"/><rect x="1276" y="703" width="1" height="1" fill="#111"/><rect x="1277" y="704" width="1" height="1" fill="#6a6a6a"/><rect x="1272" y="705" width="1" height="1" fill="#111"/><rect x="1273" y="706" width="1" height="1" fill="#6a6a6a"/><rect x="1274" y="705" width="1" height="1" fill="#111"/><rect x="1275" y="706" width="1" height="1" fill="#6a6a6a"/><rect x="1276" y="705" width="1" height="1" fill="#111"/><rect x="1277" y="706" width="1" height="1" fill="#6a6a6a"/><rect x="1270" y="707" width="1" height="1" fill="#111"/><rect x="1271" y="708" width="1" height="1" fill="#6a6a6a"/><rect x="1272" y="707" width="1" height="1" fill="#111"/><rect x="1273" y="708" width="1" height="1" fill="#6a6a6a"/><rect x="1274" y="707" width="1" height="1" fill="#111"/><rect x="1275" y="708" width="1" height="1" fill="#6a6a6a"/><rect x="1276" y="707" width="1" height="1" fill="#111"/><rect x="1277" y="708" width="1" height="1" fill="#6a6a6a"/><rect x="1268" y="709" width="1" height="1" fill="#111"/><rect x="1269" y="710" width="1" height="1" fill="#6a6a6a"/><rect x="1270" y="709" width="1" height="1" fill="#111"/><rect x="1271" y="710" width="1" height="1" fill="#6a6a6a"/><rect x="1272" y="709" width="1" height="1" fill="#111"/><rect x="1273" y="710" width="1" height="1" fill="#6a6a6a"/><rect x="1274" y="709" width="1" height="1" fill="#111"/><rect x="1275" y="710" width="1" height="1" fill="#6a6a6a"/><rect x="1276" y="709" width="1" height="1" fill="#111"/><rect x="1277" y="710" width="1" height="1" fill="#6a6a6a"/></svg>
</body></html>
